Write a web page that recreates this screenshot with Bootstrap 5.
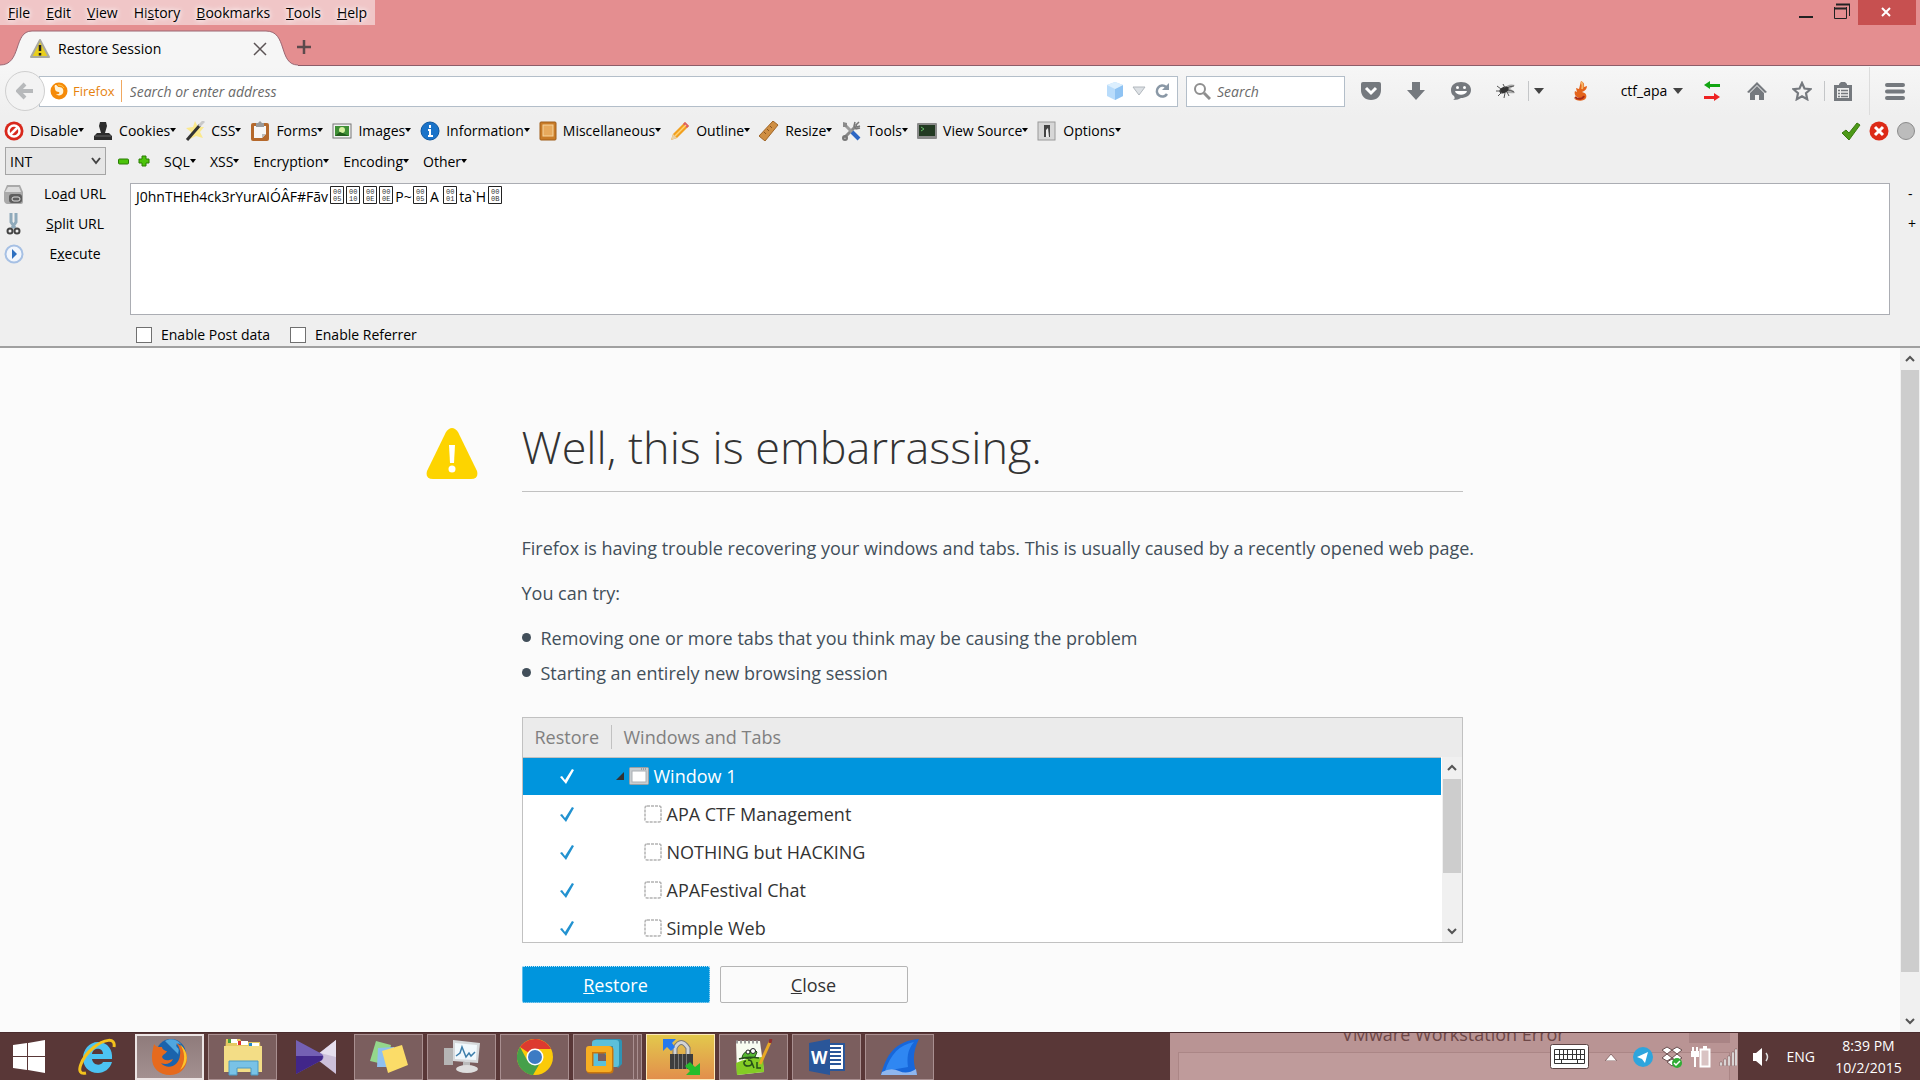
<!DOCTYPE html>
<html lang="en">
<head>
<meta charset="utf-8">
<meta name="viewport" content="width=device-width, initial-scale=1">
<title>Restore Session</title>
<link href="https://cdn.jsdelivr.net/npm/bootstrap@5.3.0/dist/css/bootstrap.min.css" rel="stylesheet">
<style>
body{font-family:"Open Sans","Noto Sans",sans-serif;font-size:14px;line-height:20px;color:#000;background:#fbfbfb;height:100vh;overflow:hidden}
button,input,select,textarea{font:inherit;color:inherit}
button{background:none;border:0;padding:0}
svg{display:block;flex:none}
.titlebar{background:#e48e90;height:66px;position:relative}
.menus{background:#f0c6c7;height:25px;padding:0 8px;gap:16px;text-shadow:0 0 4px #fff,0 0 6px #fff}
.menus a{color:#000;text-decoration:none}
.closewin{background:#c75050;width:58px;height:25px;color:#fff}
.tabrow{height:41px}
.thetab{width:300px;height:36px;position:relative}
.tabshape{position:absolute;left:0;top:0}
.tabinner{position:relative;height:36px;padding:2px 33px 0 30px}
.newtab{margin:2px 0 0 -3px}
.edge{position:absolute;left:0;right:0;bottom:0;height:1px;background:#8d5d68}
.navbox{background:linear-gradient(#f6f6f6,#efefef);height:50px;padding:0 5px}
.back{width:40px;height:40px;border:1px solid #cfcfcf;border-radius:50%;background:#f3f3f3;z-index:2}
.urlbox{height:31px;border:1px solid #b3bec9;background:#fff;margin-left:-6px;padding:0 7px 0 10px}
.urlbox input,.searchbox input{border:0;outline:0;background:transparent;min-width:0;font-style:italic;padding:2px 0 0}
.urlbox input::placeholder,.searchbox input::placeholder{color:#6a6a6a;opacity:1}
.ident{color:#e6820e;border-right:1px solid #f0a860;height:22px;padding-right:6px;gap:5px;font-size:13px}
.searchbox{width:159px;height:31px;border:1px solid #b3bec9;background:#fff;margin-left:8px;padding:0 6px;gap:6px}
.tools{margin-left:3px}
.tools>button{width:45px;height:36px;display:flex;align-items:center;justify-content:center}
.vline{width:1px;height:20px;background:#c4c6c8}
.vline.tall{height:48px;background:#dcdcdc}
.tools>.slim{width:20px}
.tools>.wide{width:62px}
.tools>.name{width:74px;gap:6px}
.tools>.list{width:36px}
.devbar{background:#efefef;height:30px;padding:0 5px 0 4px}
.devbar .items{gap:9px}
.devbar button{display:flex;align-items:center;gap:6px}
.dd::after{content:"";display:inline-block;border:3px solid transparent;border-top:4px solid #000;border-bottom:0;vertical-align:4px}
.hackbar{background:#efefef;padding:1px 0 0 5px;border-bottom:2px solid #a0a0a0;height:202px}
.pick{width:101px;height:28px;border:1px solid #a5a5a5;background:#e6e6e6 url("data:image/svg+xml,%3Csvg xmlns='http://www.w3.org/2000/svg' width='10' height='8'%3E%3Cpath d='M1 1l4 5 4-5' fill='none' stroke='%23444' stroke-width='2'/%3E%3C/svg%3E") no-repeat right 4px center;appearance:none;padding:2px 4px 0}
.hackmenu{gap:14px;padding:2px 0 0 14px}
.side{width:125px}
.side button{display:flex;align-items:center;height:30px;width:120px}
.side button span{flex:1;text-align:center}
.side svg{margin-left:-2px}
.entry{position:relative;height:132px}
.entry textarea{width:100%;height:100%;border:1px solid #abadb3;background:#fff;resize:none;padding:3px 5px;outline:0;display:block}
.codes{position:absolute;left:200px;top:2px}
.plus{width:30px;padding-left:18px}
.plus button{height:30px;display:block}
.opts{gap:20px;height:24px;margin:8px 0 0 131px}
.opts label{display:flex;align-items:center;gap:9px}
.opts input{appearance:none;width:16px;height:16px;border:1px solid #707070;background:#fff;margin:0}
.page{background:#fbfbfb;min-height:0}
.sheet{width:1049px;margin:0 auto;padding:63px 12px 0 0;color:#424f5a;font-size:18px;line-height:28px}
.warn{width:96px;padding-top:17px}
.sheet h1{font-weight:300;font-size:45px;line-height:72px;color:#333;margin:0;padding-bottom:8px;border-bottom:1px solid #c1c1c1}
.board{width:941px}
.blurb{margin:42px 0 17px}
.tips{list-style:none;padding:0;margin:13px 0 27px}
.tips li{display:flex;align-items:center;gap:10px;height:35px}
.tips li::before{content:"";width:9px;height:9px;border-radius:50%;background:#424f5a}
.tree{border:1px solid #c1c1c1;height:226px;background:#fff;display:flex;overflow:hidden;position:relative}
.tree table{width:100%;color:#333}
.tree thead th{background:#ebebeb;color:#808080;font-weight:400;height:39px;border-bottom:1px solid #c1c1c1;padding:0}
.tree th div{height:24px;line-height:24px;padding-left:12px}
.tree th:first-child{width:89px}
.tree th:first-child div{border-right:1px solid #c1c1c1}
.tree td{height:38px;padding:0}
.tree .picked{background:#0095dd;color:#fff}
.tree td input{appearance:none;display:block;width:14px;height:15px;margin:0 auto;background:url("data:image/svg+xml,%3Csvg xmlns='http://www.w3.org/2000/svg' width='14' height='15'%3E%3Cpath d='M0 8l2-1 3 4L12 0l2 1-8 14z' fill='%232292d0'/%3E%3C/svg%3E")}
.tree .picked input{background-image:url("data:image/svg+xml,%3Csvg xmlns='http://www.w3.org/2000/svg' width='14' height='15'%3E%3Cpath d='M0 8l2-1 3 4L12 0l2 1-8 14z' fill='white'/%3E%3C/svg%3E")}
.cellrow{display:flex;align-items:center;gap:5px;padding-left:32px}
.picked .cellrow{padding-left:4px}
.bar{background:#f0f0f0;width:20px;display:flex;flex-direction:column;align-items:center}
.bar button{height:22px;display:flex;align-items:center;justify-content:center;width:20px}
.bar i{display:block;width:18px;background:#cdcdcd}
.tree .bar{position:absolute;right:0;top:39px;bottom:0;border-left:1px solid #fff;width:21px}
.acts{gap:10px;margin-top:23px}
.acts button{width:188px;height:37px;border:1px solid #b5b5b5;border-radius:2px;color:#333;background:#fbfbfb}
.acts .go{background:#0095dd;color:#fff;border:1px dotted #bfe4f7}
.taskbar{background:#593737;height:48px;position:relative;overflow:hidden;border-top:1px solid #4a2b2d}
.apps{gap:4px}
.apps button{width:69px;height:46px;border:1px solid transparent;display:flex;align-items:center;justify-content:center}
.apps .start{width:58px}
.apps .open{background:#7b5e5e;border-color:#a98f90}
.apps .front{background:linear-gradient(#8f7b7b,#a39090);border:2px solid #ece4e4}
.apps .hot{background:linear-gradient(#e3c84c,#e28f4c);border-color:#fbe9b8}
.apps .stack{padding-right:8px;box-shadow:inset -3px 0 #7b5e5e,inset -4px 0 #a98f90,inset -7px 0 #7b5e5e,inset -8px 0 #a98f90}
.ghost{position:absolute;left:1170px;right:182px;top:0;bottom:0;background:#b99494;color:#6d4747;font-size:18px;line-height:20px;overflow:hidden}
.ghost .pane{position:absolute;left:8px;right:8px;top:19px;bottom:0;background:#bf9b9b;border:1px solid #ab8686;border-bottom:0}
.ghost span{position:absolute;left:172px;top:-9px}
.ghost b{position:absolute;right:8px;top:0;width:41px;height:10px;background:#a98485}
.tray{position:relative;color:#fff;padding-right:14px}
.clock{text-align:center;line-height:22px;padding-left:16px;width:91px}
</style>
<script src="https://cdn.jsdelivr.net/npm/bootstrap@5.3.0/dist/js/bootstrap.bundle.min.js"></script>
</head>
<body class="d-flex flex-column">
<header>
<div class="titlebar">
  <div class="d-flex justify-content-between align-items-start">
    <nav class="menus d-flex align-items-center" aria-label="Menu bar">
      <a href="#"><u>F</u>ile</a><a href="#"><u>E</u>dit</a><a href="#"><u>V</u>iew</a><a href="#">Hi<u>s</u>tory</a><a href="#"><u>B</u>ookmarks</a><a href="#"><u>T</u>ools</a><a href="#"><u>H</u>elp</a>
    </nav>
    <div class="d-flex pe-1">
      <button aria-label="Minimize"><svg width="34" height="25"><path d="M9 17h14" stroke="#222" stroke-width="2"/></svg></button>
      <button aria-label="Restore down"><svg width="34" height="25"><path d="M10.500 7v11.500h12V7M12 4.500h13.500V16" fill="none" stroke="#222"/><path d="M10 8.500h13M12 4.500h14" stroke="#222" stroke-width="2"/></svg></button>
      <button class="closewin" aria-label="Close window"><svg width="58" height="25"><path d="M24 8l8 8M32 8l-8 8" stroke="#fff" stroke-width="2"/></svg></button>
    </div>
  </div>
  <div class="tabrow d-flex align-items-end">
    <div class="edge"></div>
    <div class="thetab">
      <svg class="tabshape" width="300" height="36"><path d="M0 36V35C22 35 13 1 32 1H266C288 1 278 35 298 35V36z" fill="#f6f6f6"/><path d="M0 35C22 35 13 1 32 1H266C288 1 278 35 298 35" fill="none" stroke="#9a6672"/></svg>
      <div class="tabinner d-flex align-items-center">
        <svg width="20" height="20" viewBox="0 0 20 20"><path d="M10 1l9 17H1z" fill="#e9cf1c" stroke="#a9a9a0" stroke-width="2" stroke-linejoin="round"/><path d="M10 6v6M10 14v2.500" stroke="#222" stroke-width="2.500"/></svg>
        <span class="ms-2 flex-grow-1">Restore Session</span>
        <button aria-label="Close tab"><svg width="14" height="14"><path d="M1 1l12 12M13 1L1 13" stroke="#5b5355" stroke-width="1.500"/></svg></button>
      </div>
    </div>
    <button class="newtab align-self-center" aria-label="New tab"><svg width="14" height="14"><path d="M7 0v14M0 7h14" stroke="#5c4a4c" stroke-width="2.500"/></svg></button>
  </div>
</div>

<div class="navbox d-flex align-items-center">
  <button class="back d-flex align-items-center justify-content-center" aria-label="Back"><svg width="18" height="18" viewBox="0 0 18 18"><path d="M9 2L2 9l7 7M3 9h14" fill="none" stroke="#b7b9bb" stroke-width="4"/></svg></button>
  <div class="urlbox d-flex align-items-center flex-grow-1">
    <span class="ident d-flex align-items-center"><svg width="18" height="18" viewBox="0 0 18 18"><circle cx="9" cy="9" r="8.500" fill="#f58a08"/><path d="M5 3c3 0 2 2 4 2 4 0 5 3 4 6-1 3-6 3-7 1 3 1 4-1 3-2-2 0-4-1-4-3 0-2-1-2 0-4z" fill="#fff3d8"/><path d="M8 3c3 0 5 1 6 3" stroke="#ffc94f" fill="none"/></svg>Firefox</span>
    <input class="flex-grow-1 ms-2" type="text" placeholder="Search or enter address" aria-label="Address">
    <svg width="18" height="20" viewBox="0 0 18 20"><path d="M9 1l8 3v11l-8 4-8-4V4z" fill="#b9dcfb"/><path d="M9 8l8-4v11l-8 4z" fill="#8fc3f3"/><path d="M9 1l8 3-8 4-8-4z" fill="#dceffe"/></svg>
    <svg class="ms-2" width="14" height="10"><path d="M1 1h12L7 9z" fill="#dde1e5" stroke="#b2b8be"/></svg>
    <button class="ms-2" aria-label="Reload"><svg width="16" height="16" viewBox="0 0 16 16"><path d="M12 4a5.500 5.500 0 1 0 1 7" fill="none" stroke="#8a98a6" stroke-width="2.500"/><path d="M15 0v7H8z" fill="#8a98a6"/></svg></button>
  </div>
  <div class="searchbox d-flex align-items-center"><svg width="18" height="18"><circle cx="7" cy="7" r="5" fill="none" stroke="#8f8f8f" stroke-width="2"/><path d="M11 11l6 6" stroke="#8f8f8f" stroke-width="3"/></svg><input class="w-100" type="search" placeholder="Search" aria-label="Search"></div>
  <div class="tools d-flex align-items-center">
    <button aria-label="Pocket"><svg width="20" height="18"><path d="M0 2q0-2 2-2h16q2 0 2 2v6c0 6-4 10-10 10S0 14 0 8z" fill="#75797e"/><path d="M5 6l5 5 5-5" fill="none" stroke="#fff" stroke-width="3"/></svg></button>
    <button aria-label="Downloads"><svg width="18" height="18"><path d="M5 0h8v8h5l-9 10L0 8h5z" fill="#75797e"/></svg></button>
    <button aria-label="Chat"><svg width="20" height="18"><path d="M10 0c6 0 10 3 10 8 0 6-6 8-10 8-2 1-4 2-8 2 2-1 2-2 1-4C1 13 0 11 0 8 0 3 4 0 10 0z" fill="#75797e"/><circle cx="6.500" cy="5.500" r="1.500" fill="#fff"/><circle cx="13.500" cy="5.500" r="1.500" fill="#fff"/><path d="M4 9h12c-1 5-11 5-12 0z" fill="#fff"/></svg></button>
    <button aria-label="Fly"><svg width="20" height="16" viewBox="0 0 20 16"><path d="M7 6q5-6 12-4l-5 4q4 1 5 4-6 1-10-1z" fill="#aaa"/><path d="M9 6q5-3 9-3M11 7q4 0 7 2" stroke="#555" fill="none"/><ellipse cx="8" cy="7" rx="5" ry="3" fill="#333" transform="rotate(-25 8 7)"/><path d="M1 3l4 3M0 8h5M2 13l4-4M8 15l1-5M13 13l-2-4M7 1l2 4" stroke="#555"/></svg></button>
    <span class="vline"></span>
    <button class="slim" aria-label="Fly menu"><svg width="10" height="6"><path d="M0 0h10L5 6z" fill="#444"/></svg></button>
    <button class="wide" aria-label="FoxyProxy"><svg width="16" height="20" viewBox="0 0 16 20"><path d="M9 0c4 2 3 4 3 6l3-1c0 3-2 5-5 6 4 1 5 3 4 6-2 4-11 3-12 0 2 1 4 1 5 0-4-1-5-4-4-7l2 1-1-4 3 1z" fill="#e4641c"/><path d="M9 1c2 2 2 4 1 7" stroke="#f4b667" stroke-width="2" fill="none"/><path d="M3 16c3 3 8 2 9-1" stroke="#a92b18" stroke-width="2" fill="none"/></svg></button>
    <button class="name ms-1">ctf_apa<svg width="10" height="6"><path d="M0 0h10L5 6z" fill="#444"/></svg></button>
    <button aria-label="Proxy switch"><svg width="16" height="20"><path d="M0 4l6-4v3h10v3H6v2z" fill="#12a512"/><path d="M16 16l-6-4v3H0v3h10v2z" fill="#ee2222"/></svg></button>
    <button aria-label="Home"><svg width="20" height="20"><path d="M0 11L10 1l10 10-2 1-8-8-8 8z M3 12l7-7 7 7v7h-5v-5H8v5H3z" fill="#75797e"/></svg></button>
    <button aria-label="Bookmark"><svg width="20" height="20"><path d="M10 2l2.500 5.500 6 .7-4.500 4 1.200 6L10 15.200 4.800 18.200l1.200-6-4.500-4 6-.7z" fill="none" stroke="#75797e" stroke-width="2.200"/></svg></button>
    <span class="vline"></span>
    <button class="list" aria-label="Bookmarks list"><svg width="18" height="19"><path d="M0 3h5V2l2-2h4l2 2v1h5v16H0z" fill="#75797e"/><path d="M3 6h12v10H3z" fill="#eee"/><path d="M4 8.500h2m1 0h7M4 11.500h2m1 0h7M4 14.500h2m1 0h7" stroke="#75797e" stroke-width="1.500"/></svg></button>
    <span class="vline tall ms-2"></span>
    <button class="ps-1" aria-label="Open menu"><svg width="20" height="17"><path d="M2 2h16M2 8.500h16M2 15h16" stroke="#75797e" stroke-width="4" stroke-linecap="round"/></svg></button>
  </div>
</div>

<div class="devbar d-flex align-items-center justify-content-between">
  <div class="items d-flex">
    <button><svg width="20" height="20"><circle cx="10" cy="10" r="9.500" fill="#d8281c"/><circle cx="10" cy="10" r="5.500" fill="none" stroke="#fff" stroke-width="2.500"/><path d="M6 14l8-8" stroke="#fff" stroke-width="2.500"/></svg><span class="dd">Disable</span></button>
    <button><svg width="20" height="20"><path d="M7 1h6l1 4-2 7h4l3 3v4H1v-4l3-3h4L6 5z" fill="#2c2c2c"/><path d="M2 15h16" stroke="#666"/></svg><span class="dd">Cookies</span></button>
    <button><svg width="20" height="20"><path d="M10 0l3 6 6 0-4 5 3 6-7-2-6 3 1-7-5-4 7-1z" fill="#fbe98c"/><path d="M2 19L15 4" stroke="#333" stroke-width="3"/><path d="M14 5l5-5" stroke="#c9c9c9" stroke-width="3"/></svg><span class="dd">CSS</span></button>
    <button><svg width="20" height="20"><rect x="1" y="2" width="18" height="18" rx="2" fill="#b5692c"/><path d="M4 5h12v8l-4 4H4z" fill="#f7f7f7"/><path d="M16 13h-4v4z" fill="#bbb"/><path d="M6 2h2l2-2 2 2h2v4H6z" fill="#999"/></svg><span class="dd">Forms</span></button>
    <button><svg width="20" height="20"><rect x="1" y="3" width="18" height="14" fill="#f2f2f2" stroke="#777"/><rect x="3" y="5" width="14" height="10" fill="#3f8f35"/><circle cx="10" cy="9" r="3" fill="#d6f0a0"/><path d="M3 15l5-4 9 4z" fill="#1f5c1a"/></svg><span class="dd">Images</span></button>
    <button><svg width="20" height="20"><circle cx="10" cy="10" r="9" fill="#1a73c9" stroke="#0d569f"/><path d="M10 4v3M8 9h2v6M8 15h5" stroke="#fff" stroke-width="2" fill="none"/></svg><span class="dd">Information</span></button>
    <button><svg width="18" height="20"><rect x="1" y="1" width="16" height="18" rx="1" fill="#c97c28" stroke="#a05f1b"/><rect x="4" y="4" width="10" height="11" fill="#e7a95c" stroke="#f7d49c"/></svg><span class="dd">Miscellaneous</span></button>
    <button><svg width="20" height="20"><path d="M1 19l2-6L15 1l4 4L7 17z" fill="#f2a01f"/><path d="M1 19l2-6 4 4z" fill="#e8cfa6"/><path d="M15 1l4 4-2 2-4-4z" fill="#dd5d68"/><path d="M5 15L16 4" stroke="#ffd377" stroke-width="1.500"/></svg><span class="dd">Outline</span></button>
    <button><svg width="20" height="20"><path d="M0 15L14 0l5 4L6 20z" fill="#cf8f43" stroke="#9e6527"/><path d="M5 11l2 2M8 8l2 2M11 5l2 2" stroke="#8a5520"/></svg><span class="dd">Resize</span></button>
    <button><svg width="20" height="20"><path d="M3 17L15 5" stroke="#888" stroke-width="3"/><path d="M5 5l7 7" stroke="#9b9b9b" stroke-width="3"/><path d="M11 11l7 7" stroke="#2c66c4" stroke-width="4"/><path d="M2 1l4 1v4l-4 0z" fill="#8a8a8a"/><path d="M18 1l-3 3 1 2 3-1M14 1l-1 4 2 3 4-1" fill="none" stroke="#777" stroke-width="1.500"/><circle cx="4" cy="17" r="2" fill="none" stroke="#777" stroke-width="2"/></svg><span class="dd">Tools</span></button>
    <button><svg width="20" height="20"><rect x="0" y="2" width="20" height="16" rx="1" fill="#8a8a8a"/><rect x="2" y="4" width="16" height="11" fill="#223a22"/><path d="M4 6l3 2-3 2" stroke="#6b6" fill="none"/></svg><span class="dd">View Source</span></button>
    <button><svg width="20" height="20"><rect x="1" y="1" width="17" height="18" fill="#d7d7d7" stroke="#9a9a9a"/><path d="M7 16V4h6v12z" fill="#444"/><path d="M9 16V9l2-2 1 9z" fill="#eee"/></svg><span class="dd">Options</span></button>
  </div>
  <div class="d-flex align-items-center gap-2">
    <svg width="20" height="18"><path d="M1 11l4-3 3 3 8-10 3 2L8 18z" fill="#4d9a18" stroke="#39780e"/></svg>
    <svg width="20" height="20"><circle cx="10" cy="10" r="9.500" fill="#dd2a17"/><path d="M6 6l8 8M14 6l-8 8" stroke="#fff" stroke-width="3"/></svg>
    <svg width="18" height="20"><circle cx="9" cy="10" r="8.500" fill="#bcbcbc" stroke="#8b8b8b"/></svg>
  </div>
</div>

<div class="hackbar">
  <div class="d-flex align-items-center">
    <select class="pick" aria-label="Injection type"><option>INT</option></select>
    <button class="ms-2 ps-1" aria-label="Remove"><svg width="12" height="12"><rect x="0.500" y="4" width="10" height="5" rx="1" fill="#4cc40a" stroke="#2a7d05"/></svg></button>
    <button class="ms-2" aria-label="Add"><svg width="12" height="12"><path d="M4 1h4v3h3v4H8v3H4V8H1V4h3z" fill="#4cc40a" stroke="#2a7d05"/></svg></button>
    <div class="hackmenu d-flex"><button class="dd">SQL</button><button class="dd">XSS</button><button class="dd">Encryption</button><button class="dd">Encoding</button><button class="dd">Other</button></div>
  </div>
  <div class="d-flex">
    <div class="side pt-1">
      <button><svg width="22" height="20"><path d="M4 1h13l3 7v10q0 2-2 2H4q-3-1-3-4V8z" fill="#a9a9a9"/><path d="M5 3h11l2 5H2z" fill="#dcdcdc"/><rect x="6" y="10" width="13" height="9" rx="3" fill="#5f5f5f"/><rect x="9" y="13" width="8" height="4" rx="2" fill="none" stroke="#ddd"/></svg><span>Lo<u>a</u>d URL</span></button>
      <button><svg width="22" height="22"><path d="M8 0v9l4 6M13 0v9l-4 6" stroke="#8faabb" stroke-width="3" fill="none"/><circle cx="7" cy="18" r="2.500" fill="none" stroke="#444" stroke-width="2"/><circle cx="14" cy="18" r="2.500" fill="none" stroke="#444" stroke-width="2"/></svg><span><u>S</u>plit URL</span></button>
      <button><svg width="22" height="20"><circle cx="11" cy="10" r="8.500" fill="#f2f6fc" stroke="#a6c0e4" stroke-width="2"/><path d="M9 5l5 5-5 5z" fill="#2d6fc0"/></svg><span>E<u>x</u>ecute</span></button>
    </div>
    <div class="entry flex-grow-1 mt-2">
      <textarea aria-label="URL" spellcheck="false">J0hnTHEh4ck3rYurAIÓÂF#Fãv&#8195;&#8202;&#8202;&#8195;&#8202;&#8202;&#8195;&#8202;&#8202;&#8195;&#8202;&#8202;P~&#8195;&#8202;&#8202;&#8202;A &#8195;&#8202;&#8202;ta`H</textarea>
      <svg class="codes" width="176" height="20" font-family="Liberation Mono" font-size="7" fill="#333" aria-hidden="true">
        <path d="M.5 1.500h13v17h-13zM16.500 1.500h13v17h-13zM33.500 1.500h13v17h-13zM49.500 1.500h13v17h-13zM83.500 1.500h13v17h-13zM113.500 1.500h13v17h-13zM158.500 1.500h13v17h-13z" fill="none" stroke="#222"/>
        <g><text x="3" y="9">00</text><text x="3" y="16">05</text><text x="19" y="9">00</text><text x="19" y="16">10</text><text x="36" y="9">00</text><text x="36" y="16">0E</text><text x="52" y="9">00</text><text x="52" y="16">0E</text><text x="86" y="9">00</text><text x="86" y="16">05</text><text x="116" y="9">00</text><text x="116" y="16">01</text><text x="161" y="9">00</text><text x="161" y="16">0B</text></g>
      </svg>
    </div>
    <div class="plus pt-1"><button>-</button><button>+</button></div>
  </div>
  <div class="opts d-flex align-items-center"><label><input type="checkbox">Enable Post data</label><label><input type="checkbox">Enable Referrer</label></div>
</div>
</header>

<main class="page flex-grow-1 d-flex">
  <div class="flex-grow-1 overflow-hidden">
    <div class="sheet d-flex">
      <div class="warn"><svg width="52" height="52" viewBox="0 0 52 52"><path d="M20 4q6-8 12 0l19 39q2 8-6 8H7q-8 0-6-8z" fill="#fdd400"/><path d="M23 17h6l-1 18h-4z" fill="#fff"/><circle cx="26" cy="41" r="3.500" fill="#fff"/></svg></div>
      <div class="board">
        <h1>Well, this is embarrassing.</h1>
        <p class="blurb text-nowrap">Firefox is having trouble recovering your windows and tabs. This is usually caused by a recently opened web page.</p>
        <p class="m-0">You can try:</p>
        <ul class="tips"><li>Removing one or more tabs that you think may be causing the problem</li><li>Starting an entirely new browsing session</li></ul>
        <div class="tree">
          <table>
            <thead><tr><th><div>Restore</div></th><th><div>Windows and Tabs</div></th></tr></thead>
            <tbody>
              <tr class="picked"><td><input type="checkbox" checked aria-label="Window 1"></td><td><div class="cellrow"><svg width="8" height="8"><path d="M8 0v8H0z" fill="#333"/></svg><svg width="20" height="18"><rect x=".5" y=".5" width="19" height="17" rx="1" fill="#c8cdd0" stroke="#9aa0a4"/><rect x="3" y="4" width="14" height="11" fill="#fff" stroke="#aab0b4"/><path d="M12 2h6" stroke="#777" stroke-dasharray="1 1"/></svg><span>Window 1</span></div></td></tr>
              <tr><td><input type="checkbox" checked aria-label="APA CTF Management"></td><td><div class="cellrow"><svg width="18" height="18"><rect x="1" y="1" width="16" height="16" rx="2" fill="none" stroke="#b3b3b3" stroke-width="1.500" stroke-dasharray="3 1"/></svg>APA CTF Management</div></td></tr>
              <tr><td><input type="checkbox" checked aria-label="NOTHING but HACKING"></td><td><div class="cellrow"><svg width="18" height="18"><rect x="1" y="1" width="16" height="16" rx="2" fill="none" stroke="#b3b3b3" stroke-width="1.500" stroke-dasharray="3 1"/></svg>NOTHING but HACKING</div></td></tr>
              <tr><td><input type="checkbox" checked aria-label="APAFestival Chat"></td><td><div class="cellrow"><svg width="18" height="18"><rect x="1" y="1" width="16" height="16" rx="2" fill="none" stroke="#b3b3b3" stroke-width="1.500" stroke-dasharray="3 1"/></svg>APAFestival Chat</div></td></tr>
              <tr><td><input type="checkbox" checked aria-label="Simple Web"></td><td><div class="cellrow"><svg width="18" height="18"><rect x="1" y="1" width="16" height="16" rx="2" fill="none" stroke="#b3b3b3" stroke-width="1.500" stroke-dasharray="3 1"/></svg>Simple Web</div></td></tr>
            </tbody>
          </table>
          <div class="bar"><button aria-label="Scroll up"><svg width="10" height="8"><path d="M1 6l4-4 4 4" fill="none" stroke="#555" stroke-width="2"/></svg></button><i style="height:94px"></i><button class="mt-auto" aria-label="Scroll down"><svg width="10" height="8"><path d="M1 2l4 4 4-4" fill="none" stroke="#555" stroke-width="2"/></svg></button></div>
        </div>
        <div class="acts d-flex"><button class="go"><u>R</u>estore</button><button><u>C</u>lose</button></div>
      </div>
    </div>
  </div>
  <div class="bar"><button aria-label="Scroll page up"><svg width="10" height="8"><path d="M1 6l4-4 4 4" fill="none" stroke="#555" stroke-width="2"/></svg></button><i style="height:88%"></i><button class="mt-auto" aria-label="Scroll page down"><svg width="10" height="8"><path d="M1 2l4 4 4-4" fill="none" stroke="#555" stroke-width="2"/></svg></button></div>
</main>

<footer class="taskbar d-flex justify-content-between align-items-center">
  <div class="ghost" aria-hidden="true"><div class="pane"></div><span>VMware Workstation Error</span><b></b></div>
  <div class="apps d-flex position-relative">
    <button class="start" aria-label="Start"><svg width="32" height="33"><path d="M0 5l14-2v13H0zM15 3l17-3v16H15zM0 17h14v13L0 28zM15 17h17v16l-17-3z" fill="#fff"/></svg></button>
    <button aria-label="Internet Explorer"><svg width="38" height="38" viewBox="0 0 38 38"><path d="M20 4c10 0 15 8 14 17H14c1 7 9 7 11 3h9c-2 7-8 11-14 11C10 35 5 28 5 20S11 4 20 4zm-6 12h11c0-7-10-7-11 0z" fill="#4cc3f2"/><path d="M8 35C-4 38 3 20 15 10 26 1 38-1 36 9" fill="none" stroke="#f4c21c" stroke-width="3"/></svg></button>
    <button class="front" aria-label="Firefox"><svg width="38" height="38" viewBox="0 0 38 38"><circle cx="20" cy="16" r="15" fill="#1b63ac"/><path d="M14 3c5-3 12-2 16 3-5-2-6 2-3 4 2 3-1 5 1 7" fill="#4fa6df"/><path d="M3 6c2 3 4 3 8 3 0 2 3 4 5 4-1 3-4 3-5 6 2 5 8 3 11 2-2 5-8 6-12 4 6 7 18 4 19-8 1-4-1-9-4-12 7 3 12 9 11 17-1 9-8 15-17 15C8 37 1 30 1 20 1 14 2 11 3 6z" fill="#e66a1d"/><path d="M29 6c9 8 9 20 0 26 6-9 5-18 0-26z" fill="#fbc52b"/></svg></button>
    <button class="open" aria-label="File Explorer"><svg width="40" height="40" viewBox="0 0 40 40"><path d="M3 2h14l2 3h18l2 30H1L3 2z" fill="#e6ca62"/><path d="M5 2h9v4H5zM14 4h11v4H14zM26 6h10v4H26z" fill="#fff"/><path d="M5 2h3v4H5z" fill="#4a9e3d"/><path d="M15 4h3v4h-3z" fill="#d33"/><path d="M26 6h3v4h-3z" fill="#28c"/><path d="M1 9h38v26H1z" fill="#f3dd86"/><path d="M6 24h29v14h-7v-7H14v7H6z" fill="#79c2e6" stroke="#4d9ac4"/></svg></button>
    <button aria-label="KMPlayer"><svg width="40" height="34" viewBox="0 0 40 34"><path d="M40 0v34L18 17z" fill="#cdc0da"/><path d="M40 0v17L24 13z" fill="#e6dfee"/><path d="M0 0l26 14q3 3 0 6L0 34z" fill="#7460b4"/><path d="M0 34V16h27l-1 4z" fill="#412689"/></svg></button>
    <button class="open" aria-label="Sticky Notes"><svg width="38" height="32" viewBox="0 0 38 32"><path d="M6 0l15 4-4 20-17-4z" fill="#94d78c"/><path d="M8 7l16-1 1 20H7z" fill="#8fc0ef"/><path d="M12 10l20-6 6 20-20 8z" fill="#fbdc68"/></svg></button>
    <button class="open" aria-label="Performance monitor"><svg width="38" height="34" viewBox="0 0 38 34"><path d="M1 8h9v17H1z" fill="#b5b5b5"/><path d="M10 0l27 3-2 20-25-2z" fill="#d6d9db"/><path d="M12 3l22 2-1 15-21-1z" fill="#f1f8fc"/><path d="M13 16l4-3 2-6 4 10 3-4 2 3 4-4" stroke="#3d7eab" fill="none" stroke-width="1.500"/><path d="M20 22h7v4h-7z" fill="#bbb"/><ellipse cx="24" cy="29" rx="11" ry="4" fill="#dedede"/></svg></button>
    <button class="open" aria-label="Chrome"><svg width="36" height="36" viewBox="0 0 36 36"><circle cx="18" cy="18" r="18" fill="#fbca08"/><path d="M18 18L3 8A18 18 0 0 1 34 10H18z" fill="#dd3a2f"/><path d="M18 18l-8 3L3 8a18 18 0 0 0 13 28l7-12z" fill="#46a04a"/><circle cx="18" cy="18" r="8.500" fill="#fff"/><circle cx="18" cy="18" r="7" fill="#3c7bc4"/></svg></button>
    <button class="open stack" aria-label="VMware"><svg width="36" height="36" viewBox="0 0 36 36"><path d="M7 3l3-3h23q3 0 3 3v22l-4 4z" fill="#2f93b4"/><path d="M9 4h21v21H9z" fill="none" stroke="#5cc0da" stroke-width="6" stroke-linejoin="round"/><path d="M4 11h20v20H4z" fill="none" stroke="#c9760c" stroke-width="7" stroke-linejoin="round"/><path d="M3 10h20v20H3z" fill="none" stroke="#f7ae22" stroke-width="6" stroke-linejoin="round"/></svg></button>
    <button class="open hot" aria-label="VPN lock"><svg width="38" height="38" viewBox="0 0 38 38"><path d="M13 17V10q6-11 13 0v7" fill="none" stroke="#777" stroke-width="5"/><path d="M13 17V10q6-11 13 0v7" fill="none" stroke="#d4d4d4" stroke-width="3"/><path d="M8 16h23v15H8z" fill="#3d3d3d"/><path d="M12.500 16v15M16.500 16v15M20.500 16v15M24.500 16v15" stroke="#777"/><path d="M1 1h13l-4 4 3 4-4 4-4-4-4 4z" fill="#2679ef"/><path d="M38 37H24l4-4-5-5 5-4 5 5 5-4z" fill="#24bd2b"/></svg></button>
    <button class="open" aria-label="Notepad++"><svg width="38" height="36" viewBox="0 0 38 36"><path d="M1 2h24l4 31-27 3z" fill="#f7fbf0"/><path d="M1 24q12-6 27-6l1 15-27 3z" fill="#84cc25"/><path d="M1 3h24" stroke="#999" stroke-width="3" stroke-dasharray="2 2"/><path d="M7 20q0-7 7-8 5-3 8 1l-2 5q-6 3-11 1z" fill="#55b830" stroke="#264f19"/><path d="M4 20q8-3 20-1M13 21c5 0 5 6 0 6-5 0-5-5-2-5M17 24l2 5M22 23v6h4" fill="none" stroke="#264f19" stroke-width="1.500"/><circle cx="18" cy="12" r="2.500" fill="#fff" stroke="#222"/><circle cx="13" cy="13" r="2" fill="#fff" stroke="#222"/><path d="M25 25L35 3" stroke="#e8a925" stroke-width="3"/><path d="M35 4l1-4" stroke="#912e2e" stroke-width="3"/></svg></button>
    <button class="open" aria-label="Word"><svg width="36" height="36" viewBox="0 0 36 36"><path d="M20 5h15v26H20z" fill="#fff" stroke="#2a5699" stroke-width="2"/><path d="M21 9h11M21 13h11M21 17h11M21 21h11M21 25h11" stroke="#2a5699" stroke-width="2"/><path d="M0 4l21-4v36L0 32z" fill="#2a5699"/><text x="2" y="25" font-family="Open Sans" font-weight="700" font-size="17" fill="#fff">W</text></svg></button>
    <button class="open" aria-label="Wireshark"><svg width="40" height="38" viewBox="0 0 40 38"><path d="M1 37C6 17 15 3 39 1c-7 14-6 24-2 36z" fill="#1767da"/><path d="M5 33C11 16 19 7 34 4c-7 8-7 17-6 25z" fill="#2f87f2"/><path d="M2 34q9-5 17-1t17-2l1 6H1z" fill="#8fb6ee"/></svg></button>
  </div>
  <div class="tray d-flex align-items-center">
    <svg width="39" height="25"><rect x=".5" y=".5" width="38" height="24" rx="2" fill="#fff" stroke="#5b4444"/><path d="M4.500 5.500h30v14h-30zM4 10.500h31M4 15.500h31M9.500 5v10M13.500 5v10M17.500 5v10M22.500 5v10M26.500 5v10M30.500 5v10M11.500 15v5M27.500 15v5" fill="none" stroke="#333"/></svg>
    <svg class="ms-3" width="12" height="8"><path d="M0 8l6-7 6 7z" fill="#fff" stroke="#8c6c6c"/></svg>
    <svg class="ms-3" width="20" height="20"><circle cx="10" cy="10" r="10" fill="#2ea5dd"/><path d="M4 10l11-5-3 11-3-4z" fill="#fff"/></svg>
    <svg class="ms-2" width="22" height="22"><path d="M6 1l5 3-5 4-5-4zM16 1l5 3-5 4-5-4zM6 8l5 4-5 3-5-3zM16 8l5 4-5 3-5-3zM6 16l5-3 5 3-5 4z" fill="#fff" stroke="#6b5050"/><circle cx="16" cy="17" r="5" fill="#30ad35"/><path d="M13 17l2 2 4-4" stroke="#fff" fill="none" stroke-width="1.500"/></svg>
    <svg class="ms-2" width="20" height="22"><path d="M2 1v5M6 1v5M1 6h6v4H1zM4 10v11" stroke="#fff" stroke-width="2" fill="#fff"/><rect x="9.500" y="3.500" width="9" height="17" fill="#d9c3c3" stroke="#fff" stroke-width="2"/><rect x="12" y="0" width="4" height="3" fill="#fff"/></svg>
    <svg class="ms-2" width="18" height="18"><path d="M1 14h2v4H1zM5 11h2v7H5zM9 8h2v10H9zM13 4h2v14h-2zM16 1h2v17h-2z" fill="#fff" stroke="#6b5050" stroke-width=".5"/></svg>
    <svg class="ms-3" width="18" height="20"><path d="M0 6h3l6-5v18l-6-5H0z" fill="#fff"/><path d="M13 6q3 4 0 8" fill="none" stroke="#ddd" stroke-width="1.500"/></svg>
    <span class="ms-3">ENG</span>
    <div class="clock">8:39 PM<br>10/2/2015</div>
  </div>
</footer>
</body>
</html>
